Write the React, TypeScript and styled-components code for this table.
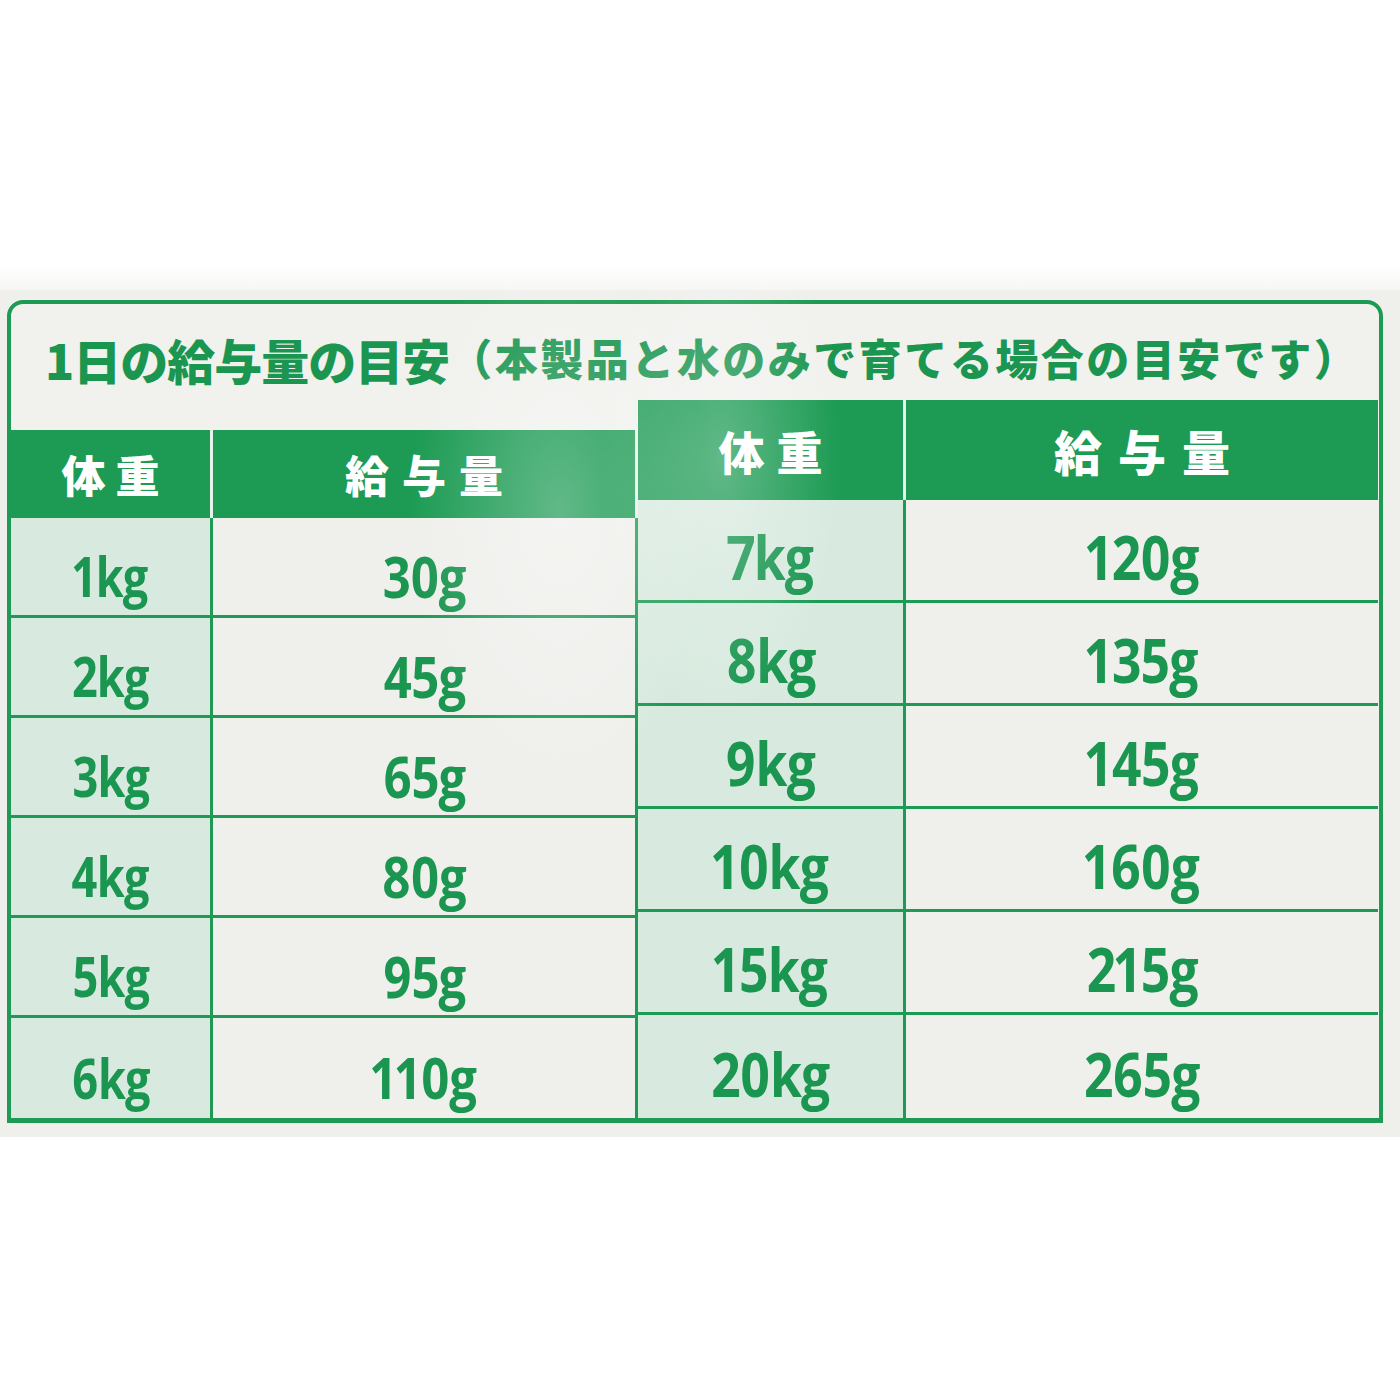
import React from "react";
import styled, { createGlobalStyle } from "styled-components";

const GREEN = "#1d9b54";
const TEXT = "#1b9651";
const PAPER = "#efefec";
const TINT = "#d8eadf";

const Global = createGlobalStyle`
  html, body { margin: 0; padding: 0; background: #ffffff; }
  body { font-family: "Noto Sans CJK JP", "Noto Sans", sans-serif; }
`;

const Page = styled.div`
  width: 1400px;
  height: 1400px;
  background: #ffffff;
  display: flex;
  flex-direction: column;
  overflow: hidden;
`;

const Sky = styled.div`
  height: 290px;
  background: linear-gradient(180deg, #ffffff 0%, #ffffff 92%, #f6f6f4 100%);
`;

const Package = styled.div`
  height: 847px;
  background: ${PAPER};
  padding: 10px 17px 0 7px;
  box-sizing: border-box;
  position: relative;
`;

const Panel = styled.div`
  width: 1376px;
  border: 4px solid ${GREEN};
  border-bottom-width: 5px;
  border-radius: 16px 16px 0 0;
  box-sizing: border-box;
  display: flex;
  flex-direction: column;
  background: #f1f1ee;
`;

const TitleBar = styled.div`
  height: 96px;
  padding-left: 34px;
  display: flex;
  align-items: center;
  color: ${TEXT};
  font-family: "Noto Sans CJK JP", sans-serif;
  font-weight: 900;
  white-space: nowrap;
`;

const TitleMain = styled.span`
  font-size: 48px;
  letter-spacing: -1px;
  margin-top: 14px;
`;

const TitleNote = styled.span`
  font-size: 43px;
  letter-spacing: 2.5px;
  margin-top: 10px;
`;

const Tables = styled.div`
  display: flex;
  align-items: flex-end;
`;

const Half = styled.div<{ $offset: number }>`
  display: flex;
  flex-direction: column;
  margin-top: ${(p) => p.$offset}px;
`;

const Row = styled.div<{ $cols: string; $h: number }>`
  display: grid;
  grid-template-columns: ${(p) => p.$cols};
  height: ${(p) => p.$h}px;
`;

const HeadCell = styled.div<{ $size: number; $ls: number; $edge?: boolean }>`
  background: ${GREEN};
  color: #ffffff;
  font-family: "Noto Sans CJK JP", sans-serif;
  font-weight: 900;
  font-size: ${(p) => p.$size}px;
  letter-spacing: ${(p) => p.$ls}px;
  padding-left: ${(p) => p.$ls}px;
  display: flex;
  align-items: center;
  justify-content: center;
  box-sizing: border-box;
  border-right: ${(p) => (p.$edge ? "0" : "3px solid #e9f1ec")};
`;

const BodyCell = styled.div<{ $tint?: boolean; $edge?: boolean; $last?: boolean; $pad: number }>`
  background: ${(p) => (p.$tint ? TINT : PAPER)};
  color: ${TEXT};
  display: flex;
  align-items: center;
  justify-content: center;
  padding-top: ${(p) => p.$pad}px;
  box-sizing: border-box;
  border-right: ${(p) => (p.$edge ? "0" : `3px solid ${GREEN}`)};
  border-bottom: ${(p) => (p.$last ? "0" : `3px solid ${GREEN}`)};
`;

const Num = styled.span<{ $size: number; $sx: number }>`
  display: inline-block;
  font-family: "Open Sans", "Noto Sans", sans-serif;
  font-weight: 700;
  font-size: ${(p) => p.$size}px;
  letter-spacing: -1px;
  font-variant-numeric: proportional-nums;
  transform: scaleX(${(p) => p.$sx});
`;

const Glare = styled.div`
  position: absolute;
  inset: 0;
  pointer-events: none;
  background:
    radial-gradient(ellipse 150px 280px at 560px 220px, rgba(255,255,255,0.30), rgba(255,255,255,0) 100%),
    radial-gradient(ellipse 120px 260px at 720px 170px, rgba(255,255,255,0.30), rgba(255,255,255,0) 100%);
`;

const left = [
  ["1kg", "30g"],
  ["2kg", "45g"],
  ["3kg", "65g"],
  ["4kg", "80g"],
  ["5kg", "95g"],
  ["6kg", "110g"],
];

const right = [
  ["7kg", "120g"],
  ["8kg", "135g"],
  ["9kg", "145g"],
  ["10kg", "160g"],
  ["15kg", "215g"],
  ["20kg", "265g"],
];

export default function App() {
  return (
    <Page>
      <Global />
      <Sky />
      <Package>
        <Panel>
          <TitleBar>
            <TitleMain>1日の給与量の目安</TitleMain>
            <TitleNote>（本製品と水のみで育てる場合の目安です）</TitleNote>
          </TitleBar>
          <Tables>
            <Half $offset={30}>
              <Row $cols="202px 425px" $h={88}>
                <HeadCell $size={44} $ls={10}>体重</HeadCell>
                <HeadCell $size={44} $ls={13}>給与量</HeadCell>
              </Row>
              {left.map(([w, g], i) => (
                <Row key={w} $cols="202px 425px" $h={100}>
                  <BodyCell $tint $pad={18} $last={i === left.length - 1}>
                    <Num $size={55} $sx={0.82}>{w}</Num>
                  </BodyCell>
                  <BodyCell $pad={18} $last={i === left.length - 1}>
                    <Num $size={57} $sx={0.86}>{g}</Num>
                  </BodyCell>
                </Row>
              ))}
            </Half>
            <Half $offset={0}>
              <Row $cols="268px 472px" $h={100}>
                <HeadCell $size={46} $ls={12}>体重</HeadCell>
                <HeadCell $size={48} $ls={16} $edge>給与量</HeadCell>
              </Row>
              {right.map(([w, g], i) => (
                <Row key={w} $cols="268px 472px" $h={103}>
                  <BodyCell $tint $pad={14} $last={i === right.length - 1}>
                    <Num $size={60} $sx={0.86}>{w}</Num>
                  </BodyCell>
                  <BodyCell $edge $pad={14} $last={i === right.length - 1}>
                    <Num $size={60} $sx={0.86}>{g}</Num>
                  </BodyCell>
                </Row>
              ))}
            </Half>
          </Tables>
        </Panel>
        <Glare />
      </Package>
    </Page>
  );
}
